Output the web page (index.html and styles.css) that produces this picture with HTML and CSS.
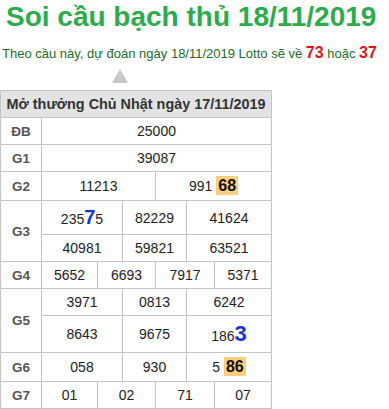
FILE: index.html
```html
<!DOCTYPE html>
<html lang="vi">
<head>
<meta charset="utf-8">
<link rel="stylesheet" href="styles.css">
</head>
<body>
<h1 class="title">Soi cầu bạch thủ 18/11/2019</h1>
<p class="predict">Theo cầu này, dự đoán ngày 18/11/2019 Lotto sẽ về <b class="red">73</b> hoặc <b class="red">37</b></p>
<div class="arrow-row"><span class="arrow"></span></div>
<table class="kq">
  <colgroup>
    <col class="c-lbl"><col class="c1"><col class="c2"><col class="c3"><col class="c4"><col class="c5"><col class="c6">
  </colgroup>
  <thead>
    <tr><th colspan="7" class="head">Mở thưởng Chủ Nhật ngày 17/11/2019</th></tr>
  </thead>
  <tbody>
    <tr><td class="lbl">ĐB</td><td colspan="6">25000</td></tr>
    <tr><td class="lbl">G1</td><td colspan="6">39087</td></tr>
    <tr><td class="lbl">G2</td><td colspan="3">11213</td><td colspan="3">991 <b class="hl">68</b></td></tr>
    <tr><td class="lbl" rowspan="2">G3</td><td colspan="2">235<b class="blue">7</b>5</td><td colspan="2">82229</td><td colspan="2">41624</td></tr>
    <tr><td colspan="2">40981</td><td colspan="2">59821</td><td colspan="2">63521</td></tr>
    <tr><td class="lbl">G4</td><td>5652</td><td colspan="2">6693</td><td colspan="2">7917</td><td>5371</td></tr>
    <tr><td class="lbl" rowspan="2">G5</td><td colspan="2">3971</td><td colspan="2">0813</td><td colspan="2">6242</td></tr>
    <tr><td colspan="2">8643</td><td colspan="2">9675</td><td colspan="2">186<b class="blue big">3</b></td></tr>
    <tr><td class="lbl">G6</td><td colspan="2">058</td><td colspan="2">930</td><td colspan="2">5 <b class="hl">86</b></td></tr>
    <tr><td class="lbl">G7</td><td>01</td><td colspan="2">02</td><td colspan="2">71</td><td>07</td></tr>
  </tbody>
</table>
</body>
</html>
```

FILE: styles.css
```css
html, body {
  margin: 0;
  padding: 0;
  background: #fff;
  font-family: "Liberation Sans", Arial, sans-serif;
  color: #222;
}
.title {
  margin: 0;
  padding: 1px 0 0 6px;
  font-size: 28px;
  line-height: 32px;
  font-weight: bold;
  color: #2cac4c;
}
.predict {
  margin: 0;
  padding: 11px 0 0 2px;
  font-size: 13px;
  line-height: 18px;
  color: #236a2d;
  white-space: nowrap;
}
.red {
  color: #e0141e;
  font-size: 16px;
}
.arrow-row {
  height: 27px;
  padding-left: 112px;
  padding-top: 6px;
  box-sizing: border-box;
}
.arrow {
  display: block;
  width: 0;
  height: 0;
  border-left: 8px solid transparent;
  border-right: 8px solid transparent;
  border-bottom: 14px solid #c8c8c8;
}
.kq {
  border-collapse: collapse;
  table-layout: fixed;
  width: 271px;
  font-size: 14px;
  border-bottom: 2px solid #c4c4c4;
}
.c-lbl { width: 41px; }
.c1 { width: 56px; }
.c2 { width: 25px; }
.c3 { width: 33px; }
.c4 { width: 31px; }
.c5 { width: 28px; }
.c6 { width: 57px; }
.kq th, .kq td {
  border: 1px solid #c4c4c4;
  text-align: center;
  padding: 5px 0;
}
.kq .head {
  background: #e3e3e3;
  font-size: 14.4px;
  font-weight: bold;
  color: #333;
}
.kq .lbl {
  font-size: 13.5px;
  font-weight: bold;
  color: #555;
}
.hl {
  background: #f8cf7d;
  color: #111;
  font-size: 16px;
  padding: 1px 2px;
}
.blue {
  color: #1434d8;
  font-size: 20px;
}
.blue.big {
  font-size: 22px;
}
```
